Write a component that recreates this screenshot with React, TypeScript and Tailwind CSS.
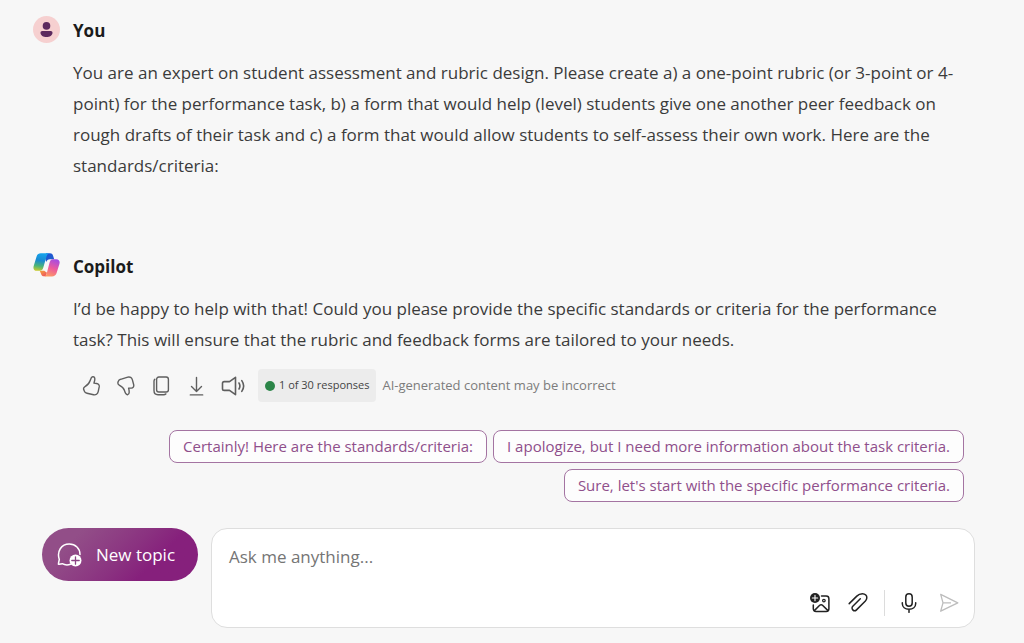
import React, { useState } from 'react';

const suggestions = [
  'Certainly! Here are the standards/criteria:',
  'I apologize, but I need more information about the task criteria.',
  "Sure, let's start with the specific performance criteria.",
];

const UserAvatar = () => (
  <svg viewBox="0 0 27 27" className="size-[27px] shrink-0" aria-hidden="true">
    <circle cx="13.5" cy="13.5" r="13.5" fill="#f6d0d0" />
    <circle cx="13.5" cy="9.9" r="3.8" fill="#5c2a5e" />
    <path d="M9.2 15h8.6c1 0 1.700.8 1.700 1.700 0 2.800-2.800 4.300-6 4.300s-6-1.500-6-4.300c0-.9.7-1.700 1.700-1.700Z" fill="#5c2a5e" />
  </svg>
);

const CopilotLogo = () => (
  <svg viewBox="0 0 27 27" className="size-[27px] shrink-0" aria-hidden="true">
    <defs>
      <linearGradient id="cp-left" x1="9" y1="1" x2="6" y2="20" gradientUnits="userSpaceOnUse">
        <stop offset="0" stopColor="#16a5ee" />
        <stop offset="0.4" stopColor="#1a8ad0" />
        <stop offset="0.7" stopColor="#4db576" />
        <stop offset="1" stopColor="#e3cf20" />
      </linearGradient>
      <linearGradient id="cp-top" x1="14" y1="1" x2="20" y2="8" gradientUnits="userSpaceOnUse">
        <stop offset="0" stopColor="#1b52d8" />
        <stop offset="1" stopColor="#2360c9" />
      </linearGradient>
      <linearGradient id="cp-right" x1="22" y1="7" x2="15" y2="25" gradientUnits="userSpaceOnUse">
        <stop offset="0" stopColor="#a34be4" />
        <stop offset="0.5" stopColor="#ed5a9c" />
        <stop offset="1" stopColor="#ffa15f" />
      </linearGradient>
      <linearGradient id="cp-bottom" x1="8" y1="18" x2="12" y2="25" gradientUnits="userSpaceOnUse">
        <stop offset="0" stopColor="#f5a63a" />
        <stop offset="1" stopColor="#ee4d63" />
      </linearGradient>
    </defs>
    <path d="M13 1.200h4c1.500 0 2.500.9 3 2.300l1.200 3.700h-4.400c-1.800 0-3 1-3.600 2.900L12 6Z" fill="url(#cp-top)" />
    <path d="M6.700 18.800h4.500l2.800 2-1.300 3.400H11c-1.500 0-2.500-.9-2.900-2.300Z" fill="url(#cp-bottom)" />
    <path d="M7.800 1.200h8.700c-1.500.3-2.400 1.300-2.900 3L10.300 15.500c-.6 2.100-1.600 3.300-3.600 3.300H3.800C1 18.800-.1 16.700.7 14L3.500 4.700C4.200 2.400 5.500 1.200 7.800 1.200Z" fill="url(#cp-left)" />
    <path d="M20 7.200h3.300c2.800 0 3.900 2.100 3.100 4.800l-2.800 8.900c-.7 2.300-2.300 3.500-4.700 3.500H10.900c1.500-.3 2.300-1.300 2.800-3L16.600 10.500c.6-2.100 1.500-3.300 3.400-3.300Z" fill="url(#cp-right)" />
  </svg>
);

const ThumbUp = () => (
  <svg viewBox="0 0 20 20" className="size-5" fill="none" stroke="currentColor" strokeWidth="1.4" strokeLinejoin="round" strokeLinecap="round">
    <path d="M11.200.9c1-.5 2.400.1 2.600 1.600.2 1.500-.4 3-.8 4.600l2.600.4c1.900.3 2.900 1.700 2.600 3.400l-1 4.700c-.5 2.400-2.300 3.700-4.600 3.200l-6.600-1.500c-1.400-.3-2.300-1-2.700-2.200l-.6-1.500c-.4-1.300.2-2.400 1.300-3 2.800-1.500 4.400-3.600 5.300-6.300C9.800 2.900 10.200 1.400 11.200.9Z" />
  </svg>
);

const ThumbDown = () => (
  <svg viewBox="0 0 20 20" className="size-5" fill="none" stroke="currentColor" strokeWidth="1.4" strokeLinejoin="round" strokeLinecap="round">
    <path d="M11.500 18.700c1.200-.2 1.700-1.300 1.700-2.500 0-1.400-.2-2.800-.6-4.100h2.700c1.800 0 2.800-1.500 2.400-3.300l-1.300-4.900c-.6-2.300-2.400-3.400-4.600-2.800L4.600 3.300c-1.200.3-2 1-2.400 2.100-.6 1.700-.4 3.100 1 3.800 3 1.500 4.400 2.800 5.300 5.400.7 2.200 1.300 4.300 3 4.100Z" />
  </svg>
);

const Copy = () => (
  <svg viewBox="0 0 20 20" className="size-5" fill="none" stroke="currentColor" strokeWidth="1.4" strokeLinecap="round">
    <rect x="5.600" y="1" width="11.800" height="15" rx="2.200" />
    <path d="M3.800 3.300c-.5.500-.8 1.100-.8 1.900v9.300c0 2.500 1.600 4.200 4 4.200h5.700c.9 0 1.600-.3 2.200-.8" />
  </svg>
);

const Download = () => (
  <svg viewBox="0 0 20 20" className="size-5" fill="none" stroke="currentColor" strokeWidth="1.4" strokeLinecap="round" strokeLinejoin="round">
    <path d="M10.500 1.500v14M5.500 10.600l5 4.900 5-4.900M4.300 18.900h12.400" />
  </svg>
);

const Speaker = () => (
  <svg viewBox="0 0 24 20" className="h-5 w-6" fill="none" stroke="currentColor" strokeWidth="1.6" strokeLinecap="round" strokeLinejoin="round">
    <path d="M14.500 1.300v17.400L8.500 14.400H3.200c-1 0-1.700-.7-1.700-1.700V7.300c0-1 .7-1.700 1.700-1.700h5.300ZM18 7c1.100 1.800 1.100 4.200 0 6M20.800 4.600c2.200 3.200 2.200 7.600 0 10.800" />
  </svg>
);

const NewTopicIcon = () => (
  <svg viewBox="0 0 26 26" className="size-[26px] shrink-0" fill="none" aria-hidden="true">
    <path d="M13.500 22.300c-2.800 1-5.800.8-8.300-.6L2 22.300c-.4 0-.7-.2-.6-.6l.9-4.200C-.4 9.500 4.200 2 12.300 2c6.200 0 10.700 4.600 10.700 10.500" stroke="#fff" strokeWidth="1.5" strokeLinecap="round" />
    <circle cx="18.500" cy="18.500" r="6" fill="#fff" />
    <path d="M18.500 14.800v7.400M14.800 18.500h7.400" stroke="#8b4584" strokeWidth="1.3" strokeLinecap="round" />
  </svg>
);

const AddImage = () => (
  <svg viewBox="0 0 20 20" className="size-5" fill="none" stroke="currentColor" strokeWidth="1.5" strokeLinecap="round" strokeLinejoin="round">
    <path d="M11.500 3h4.700c1.500 0 2.700 1.200 2.700 2.700v10c0 1.500-1.200 2.700-2.700 2.700H6c-1.500 0-2.700-1.200-2.700-2.700V12" />
    <path d="m4.300 17.600 5.400-5.300c.8-.8 2-.8 2.800 0l5.500 5.300" />
    <circle cx="13.900" cy="7.600" r="1.300" strokeWidth="1.2" />
    <circle cx="5" cy="5" r="5" fill="currentColor" stroke="none" />
    <path d="M5 2.300v5.400M2.300 5h5.400" stroke="#fff" strokeWidth="1.1" />
  </svg>
);

const Attach = () => (
  <svg viewBox="0 0 20 20" className="size-5" fill="none" stroke="currentColor" strokeWidth="1.5" strokeLinecap="round">
    <path d="m1.200 10.600 7.600-7.500c1.500-1.500 3.300-2.300 5.600-2.300 3 0 4.600 2 4.400 4.200-.1 1.300-.6 2.200-1.400 3l-8.900 8.900c-1 1-2.700 1-3.700 0s-1-2.700 0-3.700l7.500-7.500" />
  </svg>
);

const Mic = () => (
  <svg viewBox="0 0 20 20" className="size-5" fill="none" stroke="currentColor" strokeWidth="1.5" strokeLinecap="round">
    <rect x="6.800" y=".8" width="6.400" height="12.400" rx="3.200" />
    <path d="M3.300 9.800v.6c0 3.400 2.800 5.800 6.700 5.800s6.700-2.400 6.700-5.800v-.6M10 16.300v3" />
  </svg>
);

const Send = () => (
  <svg viewBox="0 0 20 20" className="size-5" fill="none" stroke="currentColor" strokeWidth="1.3" strokeLinejoin="round">
    <path d="M1.700 1.400 18.800 9.800 1.700 18.200 4 9.800ZM4 9.800h8" />
  </svg>
);

const messageActions = [
  { label: 'Like', icon: <ThumbUp /> },
  { label: 'Dislike', icon: <ThumbDown /> },
  { label: 'Copy', icon: <Copy /> },
  { label: 'Export', icon: <Download /> },
  { label: 'Read aloud', icon: <Speaker /> },
];

type MessageProps = {
  author: string;
  avatar: React.ReactNode;
  children: React.ReactNode;
};

const Message: React.FC<MessageProps> = ({ author, avatar, children }) => (
  <article>
    <header className="flex items-start gap-[13px]">
      {avatar}
      <h2 className="text-[17px] leading-[30px] font-bold text-[#1b1b1b]">{author}</h2>
    </header>
    <p className="mt-[11px] ml-10 text-[17px] leading-[31px] text-[#3b3b3b]">{children}</p>
  </article>
);

export default function App() {
  const [draft, setDraft] = useState('');

  return (
    <div className="min-h-screen bg-[#f7f7f7] pt-4 pb-[15px] font-['Open_Sans','Noto_Sans',sans-serif]">
      <main className="pr-[60px] pl-[33px]">
        <Message author="You" avatar={<UserAvatar />}>
          You are an expert on student assessment and rubric design. Please create a) a one-point rubric (or 3-point or 4-point) for the performance task, b) a form that would help (level) students give one another peer feedback on rough drafts of their task and c) a form that would allow students to self-assess their own work. Here are the standards/criteria:
        </Message>

        <div className="mt-[71px]">
          <Message author="Copilot" avatar={<CopilotLogo />}>
            I’d be happy to help with that! Could you please provide the specific standards or criteria for the performance task? This will ensure that the rubric and feedback forms are tailored to your needs.
          </Message>
        </div>

        {/* Feedback row */}
        <div className="mt-[14px] ml-12 flex items-center text-[#5f5f5f]">
          <div className="flex items-center gap-[15px]">
            {messageActions.map((action) => (
              <button key={action.label} type="button" aria-label={action.label} className="flex">
                {action.icon}
              </button>
            ))}
          </div>
          <div className="ml-[13px] flex h-[33px] items-center gap-1 rounded bg-[#ececec] px-[7px] text-[11px] text-[#444]">
            <span className="size-[10px] rounded-full bg-[#2b8548]" />
            1 of 30 responses
          </div>
          <span className="ml-[6px] text-[13px] text-[#7c7c7c]">AI-generated content may be incorrect</span>
        </div>

        {/* Suggested replies */}
        <div className="mt-7 ml-10 flex flex-wrap justify-end gap-[6px]">
          {suggestions.map((text) => (
            <button
              key={text}
              type="button"
              onClick={() => setDraft(text)}
              className="h-[33px] rounded-lg border border-[#a474a2] bg-[#fdfdfd] px-[13px] text-[15px] text-[#8f4f8b]"
            >
              {text}
            </button>
          ))}
        </div>
      </main>

      {/* Composer */}
      <form className="mt-[26px] flex items-start gap-[13px] pr-[49px] pl-[42px]" onSubmit={(e) => e.preventDefault()}>
        <button
          type="button"
          className="flex h-[53px] w-[156px] shrink-0 items-center gap-[13px] rounded-full bg-linear-135 from-[#924e88] from-20% to-[#86207c] to-70% pl-[15px] text-[17px] text-white"
        >
          <NewTopicIcon />
          New topic
        </button>
        <div className="min-w-0 flex-1 rounded-2xl border border-[#dedede] bg-white pt-[13px] pb-[11px]">
          <textarea
            rows={1}
            aria-label="Ask me anything"
            placeholder="Ask me anything..."
            value={draft}
            onChange={(e) => setDraft(e.target.value)}
            className="block h-[30px] w-full resize-none px-[17px] text-[17px] leading-[30px] text-[#242424] outline-none placeholder:text-[#757575]"
          />
          <div className="mt-[18px] flex items-center justify-end pr-[15px] text-[#222]">
            <button type="button" aria-label="Add an image" className="flex"><AddImage /></button>
            <button type="button" aria-label="Attach a file" className="ml-[18px] flex"><Attach /></button>
            <span className="ml-4 h-[26px] w-px bg-[#dcdcdc]" />
            <button type="button" aria-label="Use microphone" className="ml-[14px] flex"><Mic /></button>
            <button type="submit" aria-label="Submit" className="ml-5 flex text-[#bdbdbd]"><Send /></button>
          </div>
        </div>
      </form>
    </div>
  );
}
